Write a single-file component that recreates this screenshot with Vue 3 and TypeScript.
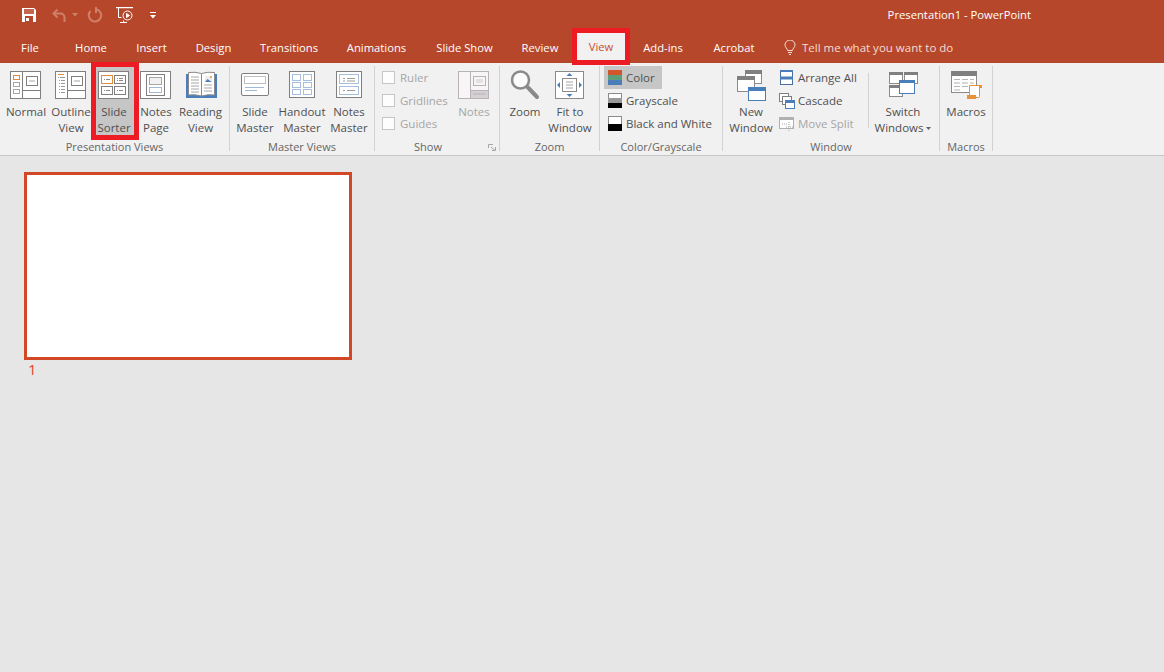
<script setup lang="ts">
const tabsLeft = [
  { label: 'File', width: 60 },
  { label: 'Home', width: 62 },
  { label: 'Insert', width: 59 },
  { label: 'Design', width: 65 },
  { label: 'Transitions', width: 86 },
  { label: 'Animations', width: 89 },
  { label: 'Slide Show', width: 87 },
  { label: 'Review', width: 64 },
]
const tabsRight = [
  { label: 'Add-ins', width: 66 },
  { label: 'Acrobat', width: 76 },
]
function w(n: number) {
  return { width: n + 'px' }
}
</script>

<template>
  <div class="app">
    <header class="titlebar">
      <div class="toprow">
        <div class="qat">
          <svg class="q-save" width="14" height="14" viewBox="0 0 14 14">
            <path d="M0 0h12l2 2v12H0z" fill="#fff" />
            <rect x="2" y="1" width="10" height="5" fill="#c4674e" />
            <rect x="3" y="8" width="8" height="6" fill="#b7472a" />
            <rect x="4" y="10" width="3" height="3" fill="#fff" />
          </svg>
          <svg class="q-undo" width="16" height="16" viewBox="0 0 16 16" fill="none" stroke="#cf806a" stroke-width="2">
            <path d="M6.500 2.500 2.500 6.500l4 4" />
            <path d="M3 6.500h6.500a4 4 0 0 1 4 4V15" />
          </svg>
          <svg class="q-caret" width="6" height="4" viewBox="0 0 6 4"><path d="M0 0h6L3 3.500z" fill="#cf806a" /></svg>
          <svg class="q-redo" width="16" height="16" viewBox="0 0 16 16" fill="none" stroke="#cf806a" stroke-width="2">
            <path d="M9.500 2.300A6.200 6.200 0 1 1 3.500 4" />
            <path d="M9 0v6" />
          </svg>
          <svg class="q-show" width="18" height="17" viewBox="0 0 18 17" fill="none" stroke="#fff" stroke-width="1">
            <path d="M0 .5h17" stroke-width="1.500" />
            <path d="M2.500 1v9.500h3M8 15.500l-.5-2M4 15.500h7" />
            <circle cx="11.500" cy="8.500" r="4.500" />
            <path d="M10.500 6.500v4l3-2z" fill="#fff" />
          </svg>
          <svg class="q-more" width="6" height="7" viewBox="0 0 6 7" fill="#fff">
            <rect y="0" width="6" height="1" />
            <path d="M0 3h6L3 6.500z" />
          </svg>
        </div>
        <div class="doc-title">Presentation1 - PowerPoint</div>
      </div>
      <nav class="tabs">
        <div v-for="t in tabsLeft" :key="t.label" class="tab" :style="w(t.width)">{{ t.label }}</div>
        <div class="tab tab-active">View</div>
        <div v-for="t in tabsRight" :key="t.label" class="tab" :style="w(t.width)">{{ t.label }}</div>
        <div class="tell">
          <svg width="12" height="15" viewBox="0 0 12 15" fill="none" stroke="#f3dcd4" stroke-width="1">
            <path d="M3.500 10.500C3.500 8.500 1 7.500 1 5a5 5 0 0 1 10 0c0 2.500-2.500 3.500-2.500 5.500z" />
            <path d="M4 12.500h4M5 14.500h2" />
          </svg>
          <span>Tell me what you want to do</span>
        </div>
      </nav>
    </header>

    <section class="ribbon">
      <div class="group g1">
        <div class="items">
          <div class="big" :style="w(46)">
            <svg class="ico" viewBox="0 0 32 32" fill="none">
              <rect x=".5" y="2.500" width="30" height="27" fill="#fff" stroke="#7f7f7f" />
              <path d="M12.500 3v26M13 21.500h17" stroke="#7f7f7f" />
              <rect x="3.500" y="6.500" width="6" height="4" stroke="#e08a3c" />
              <rect x="3.500" y="13.500" width="6" height="4" stroke="#a6a6a6" />
              <rect x="3.500" y="20.500" width="6" height="4" stroke="#a6a6a6" />
              <rect x="16.500" y="7.500" width="11" height="9" stroke="#7f7f7f" />
              <path d="M19 12h6" stroke="#a6a6a6" />
            </svg>
            <span>Normal</span>
          </div>
          <div class="big" :style="w(44)">
            <svg class="ico" viewBox="0 0 32 32" fill="none">
              <rect x=".5" y="2.500" width="30" height="27" fill="#fff" stroke="#7f7f7f" />
              <path d="M12.500 3v26M13 21.500h17" stroke="#7f7f7f" />
              <path d="M3 5.500h6" stroke="#e08a3c" />
              <path d="M3 8.500h7M4 11.500h6M4 14.500h6M4 17.500h6M4 20.500h6M4 23.500h6" stroke="#9a9a9a" stroke-dasharray="1 1 4 0" />
              <rect x="16.500" y="7.500" width="11" height="9" stroke="#7f7f7f" />
              <path d="M19 12h6" stroke="#a6a6a6" />
            </svg>
            <span>Outline<br />View</span>
          </div>
          <div class="big hot" :style="w(48)">
            <svg class="ico" viewBox="0 0 32 32" fill="none">
              <rect x=".5" y="2.500" width="30" height="27" fill="#fff" stroke="#7f7f7f" />
              <rect x="3.500" y="6.500" width="11" height="8" stroke="#e08a3c" />
              <rect x="16.500" y="6.500" width="11" height="8" stroke="#7f7f7f" />
              <rect x="3.500" y="17.500" width="11" height="8" stroke="#7f7f7f" />
              <rect x="16.500" y="17.500" width="11" height="8" stroke="#7f7f7f" />
              <path d="M6 10.500h6M19 9.500h6M19 11.500h6M6 21.500h6M19 21.500h6" stroke="#8a8a8a" stroke-dasharray="1 1 4 0" />
            </svg>
            <span>Slide<br />Sorter</span>
          </div>
          <div class="big" :style="w(34)">
            <svg class="ico" viewBox="0 0 32 32" fill="none">
              <rect x=".5" y="2.500" width="30" height="27" fill="#fff" stroke="#7f7f7f" />
              <rect x="6.500" y="5.500" width="18" height="21" stroke="#7f7f7f" />
              <rect x="9.500" y="8.500" width="12" height="7" fill="#f1f1f1" stroke="#a6a6a6" />
              <rect x="9.500" y="18.500" width="12" height="5" stroke="#3f74ae" stroke-dasharray="1 1" />
            </svg>
            <span>Notes<br />Page</span>
          </div>
          <div class="big" :style="w(55)">
            <svg class="ico" viewBox="0 0 32 32" fill="none">
              <path d="M1 5h31v24H1z" fill="#4a7ebb" />
              <path d="M3.500 3.500Q10 2.500 16.500 4.500 23 2.500 29.500 3.500V26Q23 25 16.500 27 10 25 3.500 26z" fill="#fff" stroke="#8a8a8a" />
              <path d="M16.500 5v22" stroke="#8a8a8a" />
              <path d="M6 8h8M6 11h8M6 14h8M6 17h8M6 20h8M6 23h8M19 16h8M19 19h8M19 22h8" stroke="#a6a6a6" />
              <rect x="20" y="7" width="7" height="6" fill="#e8eef5" />
              <path d="M20 13l2.500-3 2 1.500 2.500 1.500z" fill="#4a7ebb" />
              <rect x="25" y="7" width="2" height="2" fill="#e8a86c" />
            </svg>
            <span>Reading<br />View</span>
          </div>
        </div>
        <div class="glabel">Presentation Views</div>
      </div>
      <i class="sep"></i>

      <div class="group g2">
        <div class="items">
          <div class="big" :style="w(48)">
            <svg class="ico" viewBox="0 0 32 32" fill="none">
              <rect x="2.500" y="4.500" width="27" height="22" rx="1.500" fill="#fff" stroke="#7f7f7f" />
              <rect x="5.500" y="7.500" width="21" height="7" stroke="#7f7f7f" stroke-dasharray="1 1" />
              <path d="M6 18.500h19M6 21.500h12" stroke="#9db8d8" />
            </svg>
            <span>Slide<br />Master</span>
          </div>
          <div class="big" :style="w(46)">
            <svg class="ico" viewBox="0 0 32 32" fill="none">
              <rect x="3.500" y="2.500" width="25" height="26" fill="#fff" stroke="#7f7f7f" />
              <g stroke="#4a7ebb" stroke-dasharray="1 1">
                <rect x="6.500" y="5.500" width="8" height="6" />
                <rect x="17.500" y="5.500" width="8" height="6" />
                <rect x="6.500" y="13.500" width="8" height="5" />
                <rect x="17.500" y="13.500" width="8" height="5" />
                <rect x="6.500" y="20.500" width="8" height="5" />
                <rect x="17.500" y="20.500" width="8" height="5" />
              </g>
            </svg>
            <span>Handout<br />Master</span>
          </div>
          <div class="big" :style="w(48)">
            <svg class="ico" viewBox="0 0 32 32" fill="none">
              <rect x="3.500" y="2.500" width="25" height="26" fill="#fff" stroke="#7f7f7f" />
              <g stroke="#4a7ebb" stroke-dasharray="1 1">
                <rect x="6.500" y="5.500" width="19" height="9" />
                <rect x="6.500" y="17.500" width="19" height="8" />
              </g>
              <path d="M10 9.500h2M14 9.500h8M10 12h2M14 12h8M10 21.500h2M14 21.500h8" stroke="#9a9a9a" />
            </svg>
            <span>Notes<br />Master</span>
          </div>
        </div>
        <div class="glabel">Master Views</div>
      </div>
      <i class="sep"></i>

      <div class="group g3">
        <div class="items">
          <div class="smalls show-col">
            <div class="row off"><b class="check"></b>Ruler</div>
            <div class="row off"><b class="check"></b>Gridlines</div>
            <div class="row off"><b class="check"></b>Guides</div>
          </div>
          <div class="big off" :style="w(32)">
            <svg class="ico" viewBox="0 0 32 32" fill="none">
              <rect x=".5" y="2.500" width="30" height="27" fill="#f8f5f7" stroke="#b8b3b6" />
              <path d="M12.500 3v26" stroke="#b8b3b6" />
              <rect x="13" y="21" width="17" height="8" fill="#d5d0d3" />
              <path d="M13 21.500h17M15 25h13" stroke="#b8b3b6" />
              <rect x="15.500" y="7.500" width="12" height="9" stroke="#b8b3b6" />
              <path d="M18 11h7M18 13h7" stroke="#cfcbcd" />
            </svg>
            <span>Notes</span>
          </div>
        </div>
        <div class="glabel show-label">Show</div>
        <svg class="launcher" width="8" height="7" viewBox="0 0 8 7" fill="none" stroke="#a6a6a6">
          <path d="M.5 4V.5H5M3 3l4 3.500M7.500 3v3.500H4" />
        </svg>
      </div>
      <i class="sep"></i>

      <div class="group g4">
        <div class="items">
          <div class="big" :style="w(40)">
            <svg class="ico" viewBox="0 0 32 32" fill="none">
              <circle cx="11.500" cy="11" r="8.500" stroke="#8a8a8a" stroke-width="2.500" fill="#fbfbfb" />
              <path d="M18.500 18 28 28" stroke="#8a8a8a" stroke-width="4" stroke-linecap="round" />
            </svg>
            <span>Zoom</span>
          </div>
          <div class="big" :style="w(50)">
            <svg class="ico" viewBox="0 0 32 32" fill="none">
              <rect x="1.500" y="2.500" width="28" height="27" fill="#fff" stroke="#8a8a8a" />
              <rect x="8.500" y="9.500" width="14" height="13" stroke="#8a8a8a" />
              <path d="M12 13h7M12 16h7M12 19h7" stroke="#a6a6a6" />
              <path d="M15.500 4l3 3h-6zM15.500 28l3-3h-6zM3 16l3-3v6zM28 16l-3-3v6z" fill="#4a7ebb" />
            </svg>
            <span>Fit to<br />Window</span>
          </div>
        </div>
        <div class="glabel">Zoom</div>
      </div>
      <i class="sep"></i>

      <div class="group g5">
        <div class="items">
          <div class="smalls color-col">
            <div class="row selected">
              <svg class="swatch" width="14" height="15" viewBox="0 0 14 15">
                <rect width="14" height="5" fill="#d2552c" />
                <rect y="5" width="14" height="5" fill="#5c9e7c" />
                <rect y="10" width="14" height="5" fill="#4a7ebb" />
              </svg>
              Color
            </div>
            <div class="row">
              <svg class="swatch" width="14" height="15" viewBox="0 0 14 15">
                <rect x=".5" y=".5" width="13" height="14" fill="#fff" stroke="#8a8a8a" />
                <rect y="5" width="14" height="5" fill="#999" />
                <rect y="10" width="14" height="5" fill="#000" />
              </svg>
              Grayscale
            </div>
            <div class="row">
              <svg class="swatch" width="14" height="15" viewBox="0 0 14 15">
                <rect x=".5" y=".5" width="13" height="14" fill="#fff" stroke="#8a8a8a" />
                <rect y="8" width="14" height="7" fill="#000" />
              </svg>
              Black and White
            </div>
          </div>
        </div>
        <div class="glabel">Color/Grayscale</div>
      </div>
      <i class="sep"></i>

      <div class="group g6">
        <div class="items">
          <div class="big" :style="w(44)">
            <svg class="ico" viewBox="0 0 32 32" fill="none">
              <rect x="10.500" y="1.500" width="16" height="13" fill="#fff" stroke="#8a8a8a" />
              <rect x="10" y="1" width="17" height="4" fill="#7f7f7f" />
              <rect x="2.500" y="7.500" width="17" height="15" fill="#fff" stroke="#8a8a8a" />
              <rect x="2" y="7" width="18" height="4" fill="#7f7f7f" />
              <rect x="13.500" y="18.500" width="17" height="13" fill="#fff" stroke="#4a7ebb" />
              <rect x="13" y="18" width="18" height="4" fill="#4a7ebb" />
            </svg>
            <span>New<br />Window</span>
          </div>
          <div class="smalls win-col">
            <div class="row">
              <svg class="win-ico" width="16" height="16" viewBox="0 0 16 16" fill="none">
                <rect x="1.500" y=".5" width="12" height="14" fill="#fff" stroke="#4a6f9a" />
                <rect x="1" y="0" width="13" height="2" fill="#4a7ebb" />
                <rect x="1" y="6.500" width="13" height="3" fill="#4a7ebb" />
              </svg>
              Arrange All
            </div>
            <div class="row">
              <svg class="win-ico" width="16" height="16" viewBox="0 0 16 16" fill="none">
                <rect x=".5" y=".5" width="9" height="8" fill="#fff" stroke="#7f7f7f" />
                <rect x="3.500" y="3.500" width="9" height="8" fill="#fff" stroke="#7f7f7f" />
                <rect x="6.500" y="7.500" width="9" height="8" fill="#fff" stroke="#4a7ebb" />
                <rect x="6" y="7" width="10" height="3" fill="#4a7ebb" />
              </svg>
              Cascade
            </div>
            <div class="row off">
              <svg class="win-ico" width="16" height="16" viewBox="0 0 16 16" fill="none">
                <rect x=".5" y="1.500" width="14" height="11" fill="#fff" stroke="#b0b0b0" />
                <rect x="0" y="1" width="15" height="3" fill="#b0b0b0" />
                <path d="M3 8h5M10 6v9M7 11h7" stroke="#a0a0a0" stroke-dasharray="1 1" />
              </svg>
              Move Split
            </div>
          </div>
          <i class="inner-sep"></i>
          <div class="big" :style="w(68)">
            <svg class="ico" viewBox="0 0 32 32" fill="none">
              <rect x="2.500" y="3.500" width="13" height="11" fill="#fff" stroke="#8a8a8a" />
              <rect x="2" y="3" width="14" height="3" fill="#7f7f7f" />
              <rect x="17.500" y="3.500" width="13" height="11" fill="#fff" stroke="#8a8a8a" />
              <rect x="17" y="3" width="14" height="3" fill="#7f7f7f" />
              <rect x="2.500" y="16.500" width="13" height="11" fill="#fff" stroke="#8a8a8a" />
              <rect x="2" y="16" width="14" height="3" fill="#7f7f7f" />
              <rect x="12.500" y="11.500" width="15" height="13" fill="#fff" stroke="#4a7ebb" />
              <rect x="12" y="11" width="16" height="3" fill="#4a7ebb" />
            </svg>
            <span>Switch<br />Windows<svg class="drop" width="5" height="3" viewBox="0 0 5 3"><path d="M0 0h5L2.500 3z" fill="#666" /></svg></span>
          </div>
        </div>
        <div class="glabel">Window</div>
      </div>
      <i class="sep"></i>

      <div class="group g7">
        <div class="items">
          <div class="big" :style="w(52)">
            <svg class="ico" viewBox="-1 0 32 32" fill="none">
              <rect x=".5" y="2.500" width="25" height="21" fill="#fff" stroke="#8a8a8a" />
              <rect x="0" y="2" width="26" height="5" fill="#7f7f7f" />
              <path d="M3 10.500h6M11 10.500h6M19 10.500h4M3 14h6M11 14h6M19 14h4M3 17.500h6M11 17.500h6M3 21h6" stroke="#b5b5b5" />
              <path d="M18.500 16.500h10v11a1 1 0 0 1-1 1h-9z" fill="#fff" stroke="#e8913c" />
              <rect x="16" y="26" width="9" height="4" fill="#e8913c" />
              <rect x="28" y="16" width="3" height="3" fill="#e8913c" />
            </svg>
            <span>Macros</span>
          </div>
        </div>
        <div class="glabel">Macros</div>
      </div>
      <i class="sep"></i>
    </section>

    <main class="stage">
      <div class="slide"></div>
      <div class="slide-num">1</div>
    </main>
  </div>
</template>

<style scoped>
.app {
  width: 1164px;
  height: 672px;
  display: flex;
  flex-direction: column;
  overflow: hidden;
  background: #e6e6e6;
  font-family: "Open Sans", "Noto Sans", sans-serif;
  font-size: 11.5px;
  color: #505050;
}
.titlebar {
  background: #b7472a;
  color: #fff;
  height: 63px;
  flex: none;
}
.toprow {
  height: 28px;
  display: flex;
  align-items: center;
}
.qat {
  display: flex;
  align-items: center;
  padding-left: 22px;
}
.q-save { margin-top: 2px; }
.q-undo { margin-left: 15px; margin-top: 2px; }
.q-caret { margin-left: 5px; margin-top: 2px; }
.q-redo { margin-left: 9px; margin-top: 2px; }
.q-show { margin-left: 13px; margin-top: 2px; }
.q-more { margin-left: 16px; margin-top: 2px; }
.doc-title {
  margin-left: auto;
  padding-right: 133px;
  font-size: 11.25px;
  color: #fff;
}
.tabs {
  height: 35px;
  display: flex;
  align-items: center;
}
.tab {
  text-align: center;
  font-size: 11.25px;
  line-height: 16px;
  margin-top: 4px;
}
.tab-active {
  align-self: flex-start;
  position: relative;
  z-index: 2;
  box-sizing: border-box;
  width: 58px;
  height: 37px;
  margin: 0;
  border: 5px solid #ed1c24;
  background: #f1f1f1;
  color: #c8502f;
  line-height: 28px;
}
.tell {
  display: flex;
  align-items: center;
  gap: 6px;
  margin-left: 12px;
  margin-top: 4px;
  color: #f3dcd4;
}
.ribbon {
  flex: none;
  height: 92px;
  box-sizing: border-box;
  display: flex;
  background: #f1f1f1;
  box-shadow: 0 1px 0 #c6c6c6;
}
.group {
  position: relative;
  display: flex;
  flex-direction: column;
  flex: none;
}
.g1 { width: 229px; }
.g2 { width: 144px; }
.g3 { width: 124px; }
.g4 { width: 99px; }
.g5 { width: 122px; }
.g6 { width: 216px; }
.g7 { width: 52px; }
.sep {
  flex: none;
  width: 1px;
  margin: 3px 0 4px;
  background: #d2d2d2;
}
.items {
  height: 76px;
  display: flex;
}
.g1 .items { padding-left: 3px; }
.g2 .items { padding-left: 1px; }
.g3 .items { padding-left: 7px; }
.g4 .items { padding-left: 5px; }
.g5 .items { padding-left: 4px; }
.g6 .items { padding-left: 6px; }
.glabel {
  height: 16px;
  line-height: 15px;
  text-align: center;
  font-size: 11px;
  color: #666;
}
.show-label { padding-right: 18px; }
.launcher {
  position: absolute;
  left: 113px;
  bottom: 4px;
}
.big {
  box-sizing: border-box;
  flex: none;
  display: flex;
  flex-direction: column;
  align-items: center;
  text-align: center;
  line-height: 16px;
  padding-top: 6px;
  white-space: nowrap;
}
.big span { margin-top: 3px; }
.ico {
  width: 32px;
  height: 32px;
  flex: none;
}
.hot {
  height: 78px;
  margin: -1px 0 0 -2px;
  border: 5px solid #ed1c24;
  background: #c6c6c6;
  padding: 2px 2px 0 0;
  position: relative;
  z-index: 2;
}
.off { color: #a6a6a6; }
.smalls {
  flex: none;
  display: flex;
  flex-direction: column;
  padding-top: 3px;
}
.row {
  height: 23px;
  display: flex;
  align-items: center;
  white-space: nowrap;
  line-height: 22px;
}
.show-col { width: 76px; }
.show-col .row { gap: 5px; }
.check {
  width: 11px;
  height: 11px;
  border: 1px solid #c6c6c6;
  background: #fdfdfd;
}
.color-col { width: 112px; }
.color-col .row {
  padding-left: 4px;
  gap: 4px;
}
.selected {
  width: 54px;
  background: #c6c6c6;
}
.win-col {
  width: 89px;
  margin-left: 6px;
}
.win-col .row { gap: 3px; }
.inner-sep {
  flex: none;
  width: 1px;
  height: 55px;
  margin-top: 10px;
  background: #d2d2d2;
}
.drop {
  margin-left: 3px;
  vertical-align: middle;
}
.stage {
  flex: 1;
  padding: 17px 0 0 24px;
}
.slide {
  box-sizing: border-box;
  width: 328px;
  height: 188px;
  border: 3px solid #d24726;
  background: #fff;
}
.slide-num {
  margin: 0 0 0 4px;
  font-size: 15px;
  line-height: 19px;
  color: #e0492a;
}
</style>
